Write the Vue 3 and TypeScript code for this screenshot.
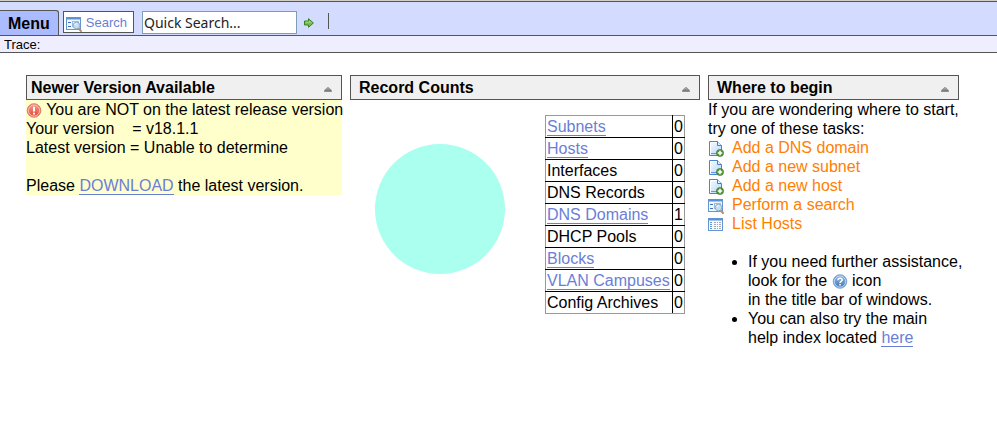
<script setup lang="ts">
import { ref } from 'vue'

interface RecordCount {
  label: string
  count: number
  linked: boolean
}

interface Task {
  label: string
  icon: 'add' | 'search' | 'list'
}

const query = ref('Quick Search...')

const records: RecordCount[] = [
  { label: 'Subnets', count: 0, linked: true },
  { label: 'Hosts', count: 0, linked: true },
  { label: 'Interfaces', count: 0, linked: false },
  { label: 'DNS Records', count: 0, linked: false },
  { label: 'DNS Domains', count: 1, linked: true },
  { label: 'DHCP Pools', count: 0, linked: false },
  { label: 'Blocks', count: 0, linked: true },
  { label: 'VLAN Campuses', count: 0, linked: true },
  { label: 'Config Archives', count: 0, linked: false },
]

const tasks: Task[] = [
  { label: 'Add a DNS domain', icon: 'add' },
  { label: 'Add a new subnet', icon: 'add' },
  { label: 'Add a new host', icon: 'add' },
  { label: 'Perform a search', icon: 'search' },
  { label: 'List Hosts', icon: 'list' },
]
</script>

<template>
  <svg class="sprites" aria-hidden="true">
    <defs>
      <linearGradient id="page-fill" x1="0" y1="0" x2="1" y2="1">
        <stop offset="0" stop-color="#fafdff" />
        <stop offset="1" stop-color="#b0d6fa" />
      </linearGradient>
      <linearGradient id="red-fill" x1="0" y1="0" x2="0" y2="1">
        <stop offset="0" stop-color="#f49a84" />
        <stop offset="1" stop-color="#e04a38" />
      </linearGradient>
      <linearGradient id="blue-fill" x1="0" y1="0" x2="0" y2="1">
        <stop offset="0" stop-color="#8fb9e6" />
        <stop offset="1" stop-color="#3f78b8" />
      </linearGradient>
      <linearGradient id="grey-fill" x1="0" y1="0" x2="0" y2="1">
        <stop offset="0" stop-color="#b5b5b5" />
        <stop offset="1" stop-color="#6c6c6c" />
      </linearGradient>
    </defs>
    <symbol id="icon-add" viewBox="0 0 16 16">
      <path d="M1.5 .5h8l4 4v10h-12z" fill="url(#page-fill)" stroke="#4a86cc" />
      <path d="M2.5 13.5v-12h6.500" fill="none" stroke="#fff" />
      <path d="M9.500 .5v4h4" fill="#e5f2fe" stroke="#4a7fbd" />
      <path d="M3 12.5h7" stroke="#5d9be0" />
      <circle cx="12" cy="12" r="3.6" fill="#56993b" stroke="#376f29" stroke-width=".6" />
      <path d="M12 9.8v4.4M9.8 12h4.4" stroke="#fff" stroke-width="1.5" />
    </symbol>
    <symbol id="icon-search" viewBox="0 0 16 16">
      <rect x=".5" y="1.5" width="14" height="12" fill="#eef6ff" stroke="#6495ce" />
      <path d="M1 2.5h13" stroke="#5a92d8" stroke-width="2" />
      <path d="M2 6.5h3M2 10.5h3" stroke="#3e72b4" />
      <rect x="6.5" y="5.5" width="6" height="5" fill="#fff" stroke="#9bbce2" />
      <path d="M12.7 12.5l2.3 2.5" stroke="#c58a62" stroke-width="2" stroke-linecap="round" />
      <circle cx="10.5" cy="9.5" r="3.3" fill="#c5def4" stroke="#91acc8" />
      <path d="M8.8 9a2 2 0 0 1 2-1.4" fill="none" stroke="#fff" />
    </symbol>
    <symbol id="icon-list" viewBox="0 0 16 16">
      <rect x=".5" y="1.5" width="14" height="12" fill="#f6faff" stroke="#6495ce" />
      <path d="M1 2.5h13" stroke="#5a92d8" stroke-width="2" />
      <path d="M2 5.5h2M2 7.5h2M2 9.5h2M2 11.5h2" stroke="#5d98dc" />
      <path
        d="M6 5.5h2M6 7.5h2M6 9.5h2M6 11.5h2M9 5.5h1M9 7.5h1M9 9.5h1M9 11.5h1M11 5.5h2M11 7.5h2M11 9.5h2M11 11.5h2"
        stroke="#a3abb5"
      />
    </symbol>
    <symbol id="icon-alert" viewBox="0 0 16 16">
      <circle cx="8" cy="7.500" r="6.800" fill="#e87767" stroke="#d9695a" stroke-width=".8" />
      <circle cx="8" cy="7.500" r="5.600" fill="url(#red-fill)" stroke="#ffd6cc" stroke-width=".8" />
      <path d="M8 3.800v4.600M8 9.700v1.700" stroke="#fff" stroke-width="2" />
    </symbol>
    <symbol id="icon-help" viewBox="0 0 16 16">
      <circle cx="8" cy="7.500" r="6.800" fill="#6d9ed2" stroke="#6c98c8" stroke-width=".8" />
      <circle cx="8" cy="7.500" r="5.600" fill="url(#blue-fill)" stroke="#d5e7fa" stroke-width=".8" />
      <path d="M6 6.200c0-2.600 4.200-2.500 4.200-.2C10.200 7.400 8 7.300 8 8.900" fill="none" stroke="#fff" stroke-width="1.5" />
      <path d="M8 9.900v1.600" stroke="#fff" stroke-width="1.6" />
    </symbol>
    <symbol id="icon-go" viewBox="0 0 10 10">
      <path d="M.5 3h4V.7L9.4 5 4.5 9.300V7h-4z" fill="#79bd51" stroke="#35841f" />
      <path d="M1.5 4.200h4V3l2 2" fill="none" stroke="#b0dc91" stroke-width=".7" />
    </symbol>
    <symbol id="icon-collapse" viewBox="0 0 8 5">
      <path d="M3.500 .4h1L7.600 3.500v1H.4v-1z" fill="url(#grey-fill)" stroke="#777" stroke-width=".6" />
    </symbol>
  </svg>

  <header>
    <div class="toolbar">
      <button class="menu" type="button">Menu</button>
      <button class="search" type="button">
        <svg class="icon"><use href="#icon-search" /></svg>
        Search
      </button>
      <form class="quick" @submit.prevent>
        <input v-model="query" type="text" aria-label="Quick Search" />
        <button class="go" type="submit" aria-label="Go">
          <svg class="go-icon"><use href="#icon-go" /></svg>
        </button>
      </form>
      <span class="divider"></span>
    </div>
    <div class="trace">Trace:</div>
  </header>

  <main>
    <section>
      <div class="title">
        <h2>Newer Version Available</h2>
        <button class="collapse" type="button" aria-label="Collapse">
          <svg class="collapse-icon"><use href="#icon-collapse" /></svg>
        </button>
      </div>
      <div class="notice">
        <p><svg class="icon inline"><use href="#icon-alert" /></svg> You are NOT on the latest release version</p>
        <p>Your version &nbsp;&nbsp; = v18.1.1</p>
        <p>Latest version = Unable to determine</p>
        <p class="download">Please <a href="#download">DOWNLOAD</a> the latest version.</p>
      </div>
    </section>

    <section>
      <div class="title wide">
        <h2>Record Counts</h2>
        <button class="collapse" type="button" aria-label="Collapse">
          <svg class="collapse-icon"><use href="#icon-collapse" /></svg>
        </button>
      </div>
      <div class="counts">
        <svg class="pie" viewBox="0 0 130 130" aria-hidden="true">
          <circle cx="65" cy="65" r="65" fill="#aaffee" />
        </svg>
        <table>
          <tbody>
            <tr v-for="record in records" :key="record.label">
              <td>
                <a v-if="record.linked" href="#records">{{ record.label }}</a>
                <template v-else>{{ record.label }}</template>
              </td>
              <td>{{ record.count }}</td>
            </tr>
          </tbody>
        </table>
      </div>
    </section>

    <section>
      <div class="title wide">
        <h2>Where to begin</h2>
        <button class="collapse" type="button" aria-label="Collapse">
          <svg class="collapse-icon"><use href="#icon-collapse" /></svg>
        </button>
      </div>
      <p>If you are wondering where to start,<br />try one of these tasks:</p>
      <a v-for="task in tasks" :key="task.label" class="task" href="#task">
        <svg class="icon"><use :href="`#icon-${task.icon}`" /></svg>
        {{ task.label }}
      </a>
      <ul>
        <li>
          If you need further assistance,<br />look for the
          <svg class="icon inline"><use href="#icon-help" /></svg> icon<br />in the title bar of windows.
        </li>
        <li>You can also try the main<br />help index located <a href="#help">here</a></li>
      </ul>
    </section>
  </main>
</template>

<style>
body {
  background: #fff;
  color: #000;
  font: 16px/19px "Liberation Sans", Arial, sans-serif;
}
</style>

<style scoped>
.sprites {
  position: absolute;
  width: 0;
  height: 0;
}

button {
  margin: 0;
  padding: 0;
  border: 0;
  background: none;
  color: inherit;
  font: inherit;
}

p,
h2 {
  margin: 0;
}

h2 {
  font-size: 16px;
}

a {
  border-bottom: 1px solid #6b7ed6;
  color: #6b7ed6;
  text-decoration: none;
}

.icon {
  display: block;
  width: 16px;
  height: 16px;
}

.inline {
  display: inline-block;
  margin-bottom: -4px;
  vertical-align: baseline;
}

.toolbar {
  display: flex;
  align-items: flex-end;
  height: 33px;
  border-top: 1px solid #555;
  border-bottom: 1px solid #555;
  background: #d3dbff;
  box-shadow: 0 -1px #d4d0c8;
  margin-top: 1px;
}

.menu {
  height: 25px;
  padding: 0 8px;
  border: 1px solid #555;
  border-width: 1px 1px 0 0;
  border-radius: 0 3px 0 0;
  background: #aabbff;
  font-weight: bold;
}

.search {
  display: flex;
  align-items: center;
  gap: 4px;
  height: 22px;
  margin: 0 8px 2px 4px;
  padding: 0 6px 0 2px;
  border: 1px solid #555;
  background: #fff;
  color: #6b7ed6;
  font-size: 13px;
}

.search .icon {
  margin-top: 3px;
}

.quick {
  display: flex;
  align-items: center;
  gap: 7px;
  margin-bottom: 1px;
}

.quick input {
  box-sizing: border-box;
  width: 155px;
  height: 23px;
  padding: 0 1px;
  border: 1px solid #7f9db9;
  background: #fff;
  color: #222;
  font: 14px "Noto Sans", sans-serif;
}

.go-icon {
  display: block;
  width: 10px;
  height: 10px;
}

.divider {
  width: 1px;
  height: 16px;
  margin: 0 0 6px 14px;
  background: #555;
}

.trace {
  padding: 0 4px;
  border-bottom: 1px solid #555;
  background: #eeeeff;
  font-size: 13px;
  line-height: 17px;
  height: 16px;
}

main {
  display: grid;
  grid-template-columns: 316px 350px 251px;
  align-items: start;
  gap: 8px;
  padding: 22px 26px;
  white-space: nowrap;
}

.title {
  display: flex;
  align-items: center;
  justify-content: space-between;
  height: 23px;
  padding: 0 9px 0 4px;
  border: 1px solid #555;
  background: #f0f0f0;
}

.wide {
  padding-left: 8px;
}

.collapse {
  padding-top: 4px;
}

.collapse-icon {
  display: block;
  width: 8px;
  height: 5px;
}

.notice {
  background: #ffffcc;
}

.download {
  padding-top: 19px;
}

.counts {
  display: flex;
  align-items: center;
  justify-content: space-between;
  padding: 15px 15px 0 25px;
}

.pie {
  width: 130px;
  height: 130px;
  margin-bottom: 11px;
}

table {
  width: 140px;
  border: 1px solid #999;
  border-collapse: collapse;
}

td {
  padding: 1px;
  border: 1px solid #000;
}

tr:first-child td {
  border-top-color: #999;
}

tr:last-child td {
  border-bottom-color: #999;
}

td:first-child {
  border-left-color: #999;
}

td:last-child {
  width: 9px;
  border-right-color: #999;
}

.task {
  display: flex;
  gap: 8px;
  border: 0;
  color: #ff8000;
}

.task .icon {
  margin-top: 3px;
}

ul {
  margin: 19px 0 0;
  padding-left: 40px;
}
</style>
